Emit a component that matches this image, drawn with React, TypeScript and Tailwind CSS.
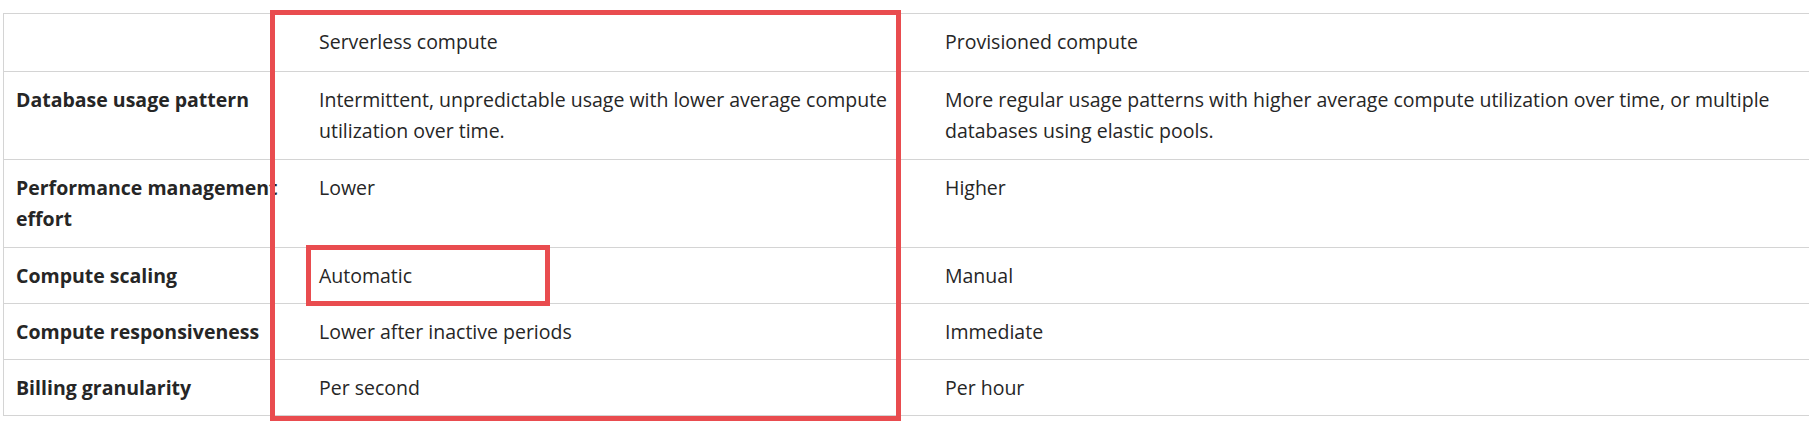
const ROWS = [
  {
    label: 'Database usage pattern',
    serverless: 'Intermittent, unpredictable usage with lower average compute utilization over time.',
    provisioned:
      'More regular usage patterns with higher average compute utilization over time, or multiple databases using elastic pools.',
    h: 'h-[88px]',
  },
  { label: 'Performance management effort', serverless: 'Lower', provisioned: 'Higher', h: 'h-[88px]' },
  { label: 'Compute scaling', serverless: 'Automatic', provisioned: 'Manual', h: 'h-[56px]' },
  { label: 'Compute responsiveness', serverless: 'Lower after inactive periods', provisioned: 'Immediate', h: 'h-[56px]' },
  { label: 'Billing granularity', serverless: 'Per second', provisioned: 'Per hour', h: 'h-[56px]' },
]

export default function App() {
  return (
    <div
      className="w-[1809px] h-[426px] bg-white overflow-hidden pt-[13px] pl-[3px] text-[#262626] text-[19.5px] leading-[31px]"
      style={{ fontFamily: '"Segoe UI", "Open Sans", "Noto Sans", sans-serif' }}
    >
      <div className="relative">
        {/* Table */}
        <div className="border-t border-l border-[#d4d4d4] w-[1806px]">
          <div className="grid grid-cols-[303px_626px_1fr] h-[58px] border-b border-[#d4d4d4]">
            <div className="px-3 pt-3" />
            <div className="px-3 pt-3">Serverless compute</div>
            <div className="px-3 pt-3">Provisioned compute</div>
          </div>
          {ROWS.map((row) => (
            <div key={row.label} className={`grid grid-cols-[303px_626px_1fr] border-b border-[#d4d4d4] ${row.h}`}>
              <div className="pl-3 pr-3 pt-3 font-bold">{row.label}</div>
              <div className="px-3 pt-3">{row.serverless}</div>
              <div className="pl-3 pr-2 pt-3">{row.provisioned}</div>
            </div>
          ))}
        </div>

        {/* Highlight boxes */}
        <div className="absolute left-[267px] top-[-3px] w-[631px] h-[411px] border-[5px] border-[#e94c4f] pointer-events-none" />
        <div className="absolute left-[303px] top-[232px] w-[244px] h-[61px] border-[5px] border-[#e94c4f] pointer-events-none" />
      </div>
    </div>
  )
}
